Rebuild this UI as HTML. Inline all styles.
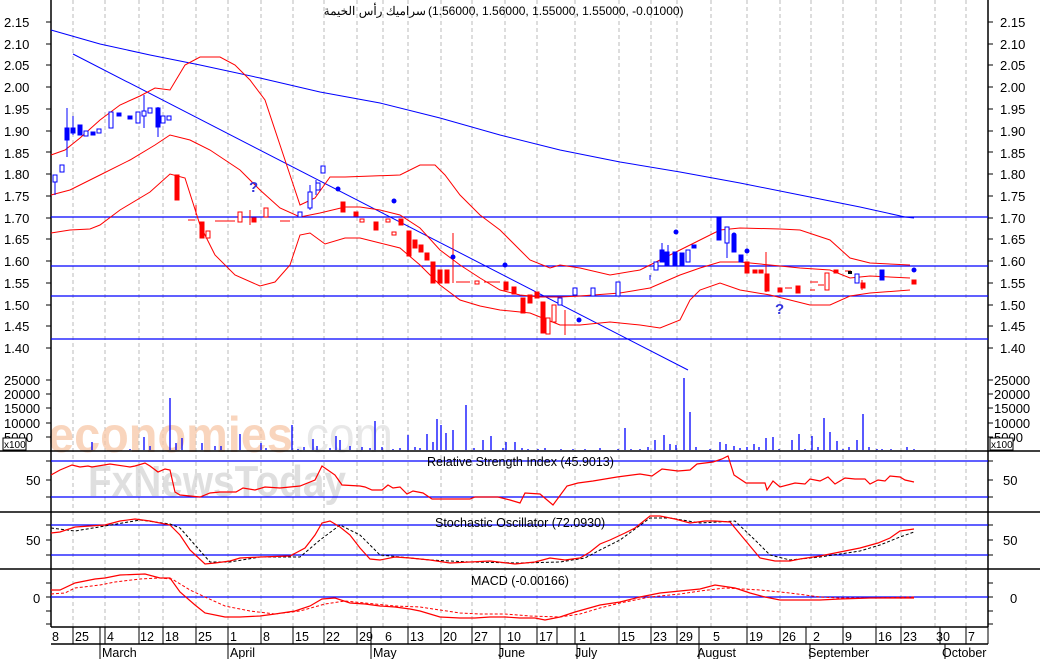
<!DOCTYPE html>
<html><head><meta charset="utf-8"><style>
html,body{margin:0;padding:0;background:#fff;overflow:hidden}
svg{display:block}
text{font-family:"Liberation Sans","Noto Sans CJK SC",sans-serif;fill:#000}
</style></head><body>
<svg width="1040" height="659" viewBox="0 0 1040 659" xmlns="http://www.w3.org/2000/svg">
<rect width="1040" height="659" fill="#fff"/>
<g stroke="#bbb" stroke-dasharray="4,3" stroke-width="1">
<path d="M73 0V627M105 0V627M139 0V627M163 0V627M196 0V627M228 0V627M261 0V627M293 0V627M324 0V627M357 0V627M383 0V627M408 0V627M441 0V627M472 0V627M505 0V627M537 0V627M575 0V627M619 0V627M651 0V627M677 0V627M711 0V627M747 0V627M780 0V627M811 0V627M843 0V627M876 0V627M901 0V627M935 0V627M966 0V627"/>
</g>
<text x="48" y="452" font-size="50" font-weight="bold" style="fill:#f8c8a8;opacity:.75" textLength="245" lengthAdjust="spacingAndGlyphs">economies</text>
<text x="293" y="452" font-size="50" style="fill:#e6e6e6;opacity:.9" textLength="100" lengthAdjust="spacingAndGlyphs">.com</text>
<text x="88" y="496" font-size="44" font-weight="bold" style="fill:#d8d8d8;opacity:.8" textLength="258" lengthAdjust="spacingAndGlyphs">FxNewsToday</text>
<g stroke="#000" stroke-width="1.5" fill="none">
<path d="M51 0V627M988 0V627"/>
<path d="M0 451H1040M0 512H1040M0 569H1040M51 627H988M51 644H988"/>
</g>
<g stroke="#000" stroke-width="1">
<path d="M46 22H51M46 44H51M46 65H51M46 87H51M46 109H51M46 131H51M46 152H51M46 174H51M46 196H51M46 218H51M46 239H51M46 261H51M46 283H51M46 305H51M46 326H51M46 348H51"/>
<path d="M988 22H993M988 44H993M988 65H993M988 87H993M988 109H993M988 131H993M988 152H993M988 174H993M988 196H993M988 218H993M988 239H993M988 261H993M988 283H993M988 305H993M988 326H993M988 348H993"/>
<path d="M46 380H51M46 394H51M46 408H51M46 423H51M46 437H51M988 380H993M988 394H993M988 408H993M988 423H993M988 437H993"/>
<path d="M46 461H51M46 480H51M46 497H51M988 461H993M988 480H993M988 497H993M46 525H51M46 540H51M46 555H51M988 525H993M988 540H993M988 555H993M46 583H51M46 597H51M46 611H51M46 624H51M988 583H993M988 597H993M988 611H993M988 624H993"/>
</g>
<g font-size="13">
<text x="4" y="27">2.15</text><text x="4" y="49">2.10</text><text x="4" y="70">2.05</text><text x="4" y="92">2.00</text><text x="4" y="114">1.95</text><text x="4" y="136">1.90</text><text x="4" y="158">1.85</text><text x="4" y="179">1.80</text><text x="4" y="201">1.75</text><text x="4" y="223">1.70</text><text x="4" y="244">1.65</text><text x="4" y="266">1.60</text><text x="4" y="288">1.55</text><text x="4" y="310">1.50</text><text x="4" y="331">1.45</text><text x="4" y="353">1.40</text>
<text x="1000" y="27">2.15</text><text x="1000" y="49">2.10</text><text x="1000" y="70">2.05</text><text x="1000" y="92">2.00</text><text x="1000" y="114">1.95</text><text x="1000" y="136">1.90</text><text x="1000" y="158">1.85</text><text x="1000" y="179">1.80</text><text x="1000" y="201">1.75</text><text x="1000" y="223">1.70</text><text x="1000" y="244">1.65</text><text x="1000" y="266">1.60</text><text x="1000" y="288">1.55</text><text x="1000" y="310">1.50</text><text x="1000" y="331">1.45</text><text x="1000" y="353">1.40</text>
<text x="4" y="385">25000</text><text x="4" y="399">20000</text><text x="4" y="413">15000</text><text x="4" y="428">10000</text><text x="4" y="442">5000</text>
<text x="994" y="385">25000</text><text x="994" y="399">20000</text><text x="994" y="413">15000</text><text x="994" y="428">10000</text><text x="994" y="442">5000</text>
<text x="26" y="485">50</text><text x="1003" y="485">50</text>
<text x="26" y="545">50</text><text x="1003" y="545">50</text>
<text x="33" y="603">0</text><text x="1010" y="603">0</text>
</g>
<rect x="3" y="438" width="23" height="12" fill="#fff" stroke="#000"/><text x="4" y="448" font-size="10">x100</text>
<rect x="990" y="438" width="23" height="12" fill="#fff" stroke="#000"/><text x="991" y="448" font-size="10">x100</text>
<text x="426" y="15" font-size="12" text-anchor="end">سراميك رأس الخيمة</text>
<text x="428" y="15" font-size="12">(1.56000, 1.56000, 1.55000, 1.55000, -0.01000)</text>
<g stroke="#0000ff" stroke-width="1.3">
<path d="M51 217H988M51 266H988M51 296H988M51 339H988"/>
<path d="M51 461H988M51 497H988M51 525H988M51 555H988M51 597H988"/>
</g>
<polyline fill="none" stroke="#0000ff" stroke-width="1" points="51,30 100,44 150,55 200,65 260,78 320,92 380,103 440,118 500,135 560,150 620,162 680,172 740,183 800,195 860,207 905,217 914,218"/>
<polyline fill="none" stroke="#0000ff" stroke-width="1" points="73,54 688,370"/>
<g fill="none" stroke="#ff0000" stroke-width="1">
<polyline points="51,155 65,150 80,138 100,120 120,105 140,96 155,88 170,90 185,65 200,57 220,57 235,65 250,80 265,100 280,145 290,175 300,205 315,198 330,177 345,177 400,175 420,165 435,165 445,175 460,195 480,215 500,230 520,250 530,260 550,268 560,265 580,268 610,275 640,270 660,260 680,250 700,240 720,230 740,228 780,229 800,230 830,240 850,258 870,263 910,265"/>
<polyline points="51,195 70,190 100,175 130,160 155,145 170,135 190,140 210,150 240,170 260,190 280,208 300,217 320,213 345,207 360,207 380,210 400,215 420,228 440,250 460,265 480,278 500,290 520,295 540,297 560,297 580,296 620,293 650,288 680,275 700,268 720,262 740,262 770,265 800,268 830,270 850,278 870,276 910,278"/>
<polyline points="51,233 70,230 90,229 100,225 120,210 150,192 170,174 185,178 200,225 215,255 235,275 260,286 275,282 290,265 300,235 310,233 325,244 345,238 360,238 380,243 400,248 420,265 440,285 460,300 480,306 500,310 530,313 560,325 580,325 610,322 640,325 660,328 680,320 690,300 700,290 720,283 740,290 770,295 790,300 810,305 830,305 850,296 870,293 910,290"/>
</g>
<g stroke="#0000ff" stroke-width="1" fill="#0000ff">
<path d="M55 175V195M67 108V157M73 116V135M144 95V128M158 107V137M310 185V210M316 180V195"/>
<rect x="53" y="175" width="4" height="7" fill="#fff"/><rect x="60" y="165" width="4" height="7" fill="#fff"/>
<rect x="65" y="128" width="4" height="12"/><rect x="71" y="128" width="4" height="5"/><rect x="78" y="125" width="4" height="10"/>
<rect x="84" y="131" width="4" height="5" fill="#fff"/><rect x="91" y="132" width="4" height="3"/><rect x="97" y="129" width="4" height="4" fill="#fff"/>
<rect x="109" y="112" width="4" height="16" fill="#fff"/><rect x="117" y="113" width="4" height="3"/><rect x="128" y="116" width="4" height="3"/>
<rect x="136" y="112" width="4" height="11" fill="#fff"/><rect x="142" y="111" width="4" height="5" fill="#fff"/><rect x="148" y="108" width="4" height="5" fill="#fff"/>
<rect x="156" y="108" width="4" height="19"/><rect x="161" y="116" width="4" height="7" fill="#fff"/><rect x="167" y="116" width="4" height="4" fill="#fff"/>
<rect x="298" y="212" width="4" height="5" fill="#fff"/><rect x="308" y="192" width="4" height="16" fill="#fff"/><rect x="316" y="183" width="4" height="7" fill="#fff"/><rect x="321" y="166" width="4" height="7" fill="#fff"/>
<rect x="558" y="298" width="4" height="7" fill="#fff"/><rect x="573" y="288" width="4" height="7" fill="#fff"/><rect x="591" y="288" width="4" height="8" fill="#fff"/><rect x="616" y="282" width="4" height="14" fill="#fff"/>
<rect x="654" y="262" width="4" height="8" fill="#fff"/><rect x="660" y="250" width="4" height="12"/><rect x="665" y="252" width="4" height="13"/><rect x="673" y="252" width="4" height="14"/><rect x="680" y="253" width="4" height="13"/><rect x="686" y="250" width="4" height="12" fill="#fff"/><rect x="692" y="245" width="4" height="3"/>
<rect x="717" y="218" width="4" height="22"/><rect x="725" y="227" width="4" height="16" fill="#fff"/><rect x="732" y="235" width="4" height="17"/><rect x="739" y="255" width="4" height="7"/>
<rect x="855" y="274" width="4" height="9" fill="#fff"/><rect x="880" y="270" width="4" height="10"/>
<path d="M727 243V258M650 275V280M662 243V262M668 245V256"/>
</g>
<g stroke="#ff0000" stroke-width="1" fill="#ff0000">
<path d="M196 205V215M250 210V225M453 233V283M565 310V335M766 252V292M862 280V290"/>
<rect x="175" y="175" width="4" height="25"/><rect x="200" y="222" width="4" height="16"/><rect x="206" y="231" width="4" height="7" fill="#fff"/>
<rect x="238" y="212" width="4" height="10" fill="#fff"/><rect x="252" y="218" width="4" height="4"/><rect x="264" y="208" width="4" height="9" fill="#fff"/>
<rect x="341" y="202" width="4" height="10"/><rect x="354" y="212" width="4" height="4"/><rect x="360" y="219" width="4" height="3" fill="#fff"/><rect x="374" y="222" width="4" height="8"/>
<rect x="386" y="219" width="4" height="3" fill="#fff"/><rect x="392" y="232" width="4" height="3" fill="#fff"/><rect x="399" y="219" width="4" height="6"/>
<rect x="407" y="231" width="4" height="25"/><rect x="413" y="240" width="4" height="8"/><rect x="419" y="245" width="4" height="7"/><rect x="425" y="253" width="4" height="7"/>
<rect x="431" y="262" width="4" height="21"/><rect x="438" y="270" width="4" height="13"/><rect x="445" y="270" width="4" height="13"/>
<rect x="475" y="281" width="4" height="3" fill="#fff"/><rect x="504" y="282" width="4" height="8"/><rect x="512" y="287" width="4" height="7"/>
<rect x="521" y="298" width="4" height="15"/><rect x="528" y="295" width="4" height="8"/><rect x="535" y="292" width="4" height="6"/>
<rect x="541" y="302" width="4" height="31"/><rect x="546" y="318" width="4" height="16" fill="#fff"/><rect x="552" y="305" width="4" height="17" fill="#fff"/>
<rect x="745" y="262" width="4" height="11"/><rect x="753" y="270" width="4" height="3"/><rect x="759" y="270" width="4" height="3"/>
<rect x="765" y="274" width="4" height="17"/><rect x="778" y="288" width="4" height="4"/><rect x="796" y="286" width="4" height="7"/>
<rect x="825" y="273" width="4" height="17" fill="#fff"/><rect x="834" y="270" width="4" height="3"/><rect x="861" y="283" width="4" height="5"/><rect x="912" y="280" width="4" height="4"/>
<path d="M188 220H195M215 221H235M280 221H290M456 282H470M484 282H500M785 288H792M810 282H818M818 285H824M845 271H851M810 290H815"/>
</g>
<rect x="848" y="271" width="4" height="3" fill="#000"/>
<g fill="#0000ff">
<circle cx="338" cy="189" r="2.5"/><circle cx="394" cy="201" r="2.5"/><circle cx="453" cy="257" r="2.5"/><circle cx="505" cy="265" r="2.5"/><circle cx="579" cy="320" r="2.5"/><circle cx="676" cy="232" r="2.5"/><circle cx="734" cy="235" r="2.5"/><circle cx="747" cy="251" r="2.5"/><circle cx="914" cy="270" r="2.5"/>
</g>
<text x="249" y="192" font-size="15" font-weight="bold" style="fill:#3333dd">?</text>
<text x="775" y="314" font-size="15" font-weight="bold" style="fill:#3333dd">?</text>
<g stroke="#0000ff" stroke-width="1.3">
<path d="M92 450V442M130 450V449M144 450V437M150 450V446M170 450V398M176 450V443M182 450V438M202 450V443M215 450V446M221 450V446M240 450V434M261 450V443M266 450V448M292 450V425M298 450V449M304 450V447M313 450V439M317 450V446M330 450V448M336 450V436M340 450V440M350 450V446M362 450V447M370 450V448M375 450V421M382 450V447M393 450V449M400 450V448M408 450V435M415 450V447M420 450V448M427 450V434M433 450V442M437 450V419M441 450V425M446 450V433M453 450V430M466 450V405M474 450V448M483 450V440M491 450V436M503 450V448M506 450V442M515 450V442M522 450V448M528 450V449M538 450V449M545 450V448M561 450V449M573 450V449M585 450V449M600 450V448M618 450V449M625 450V428M631 450V449M640 450V449M648 450V447M655 450V440M664 450V435M670 450V444M676 450V445M684 450V378M690 450V412M696 450V447M710 450V449M720 450V442M726 450V444M734 450V446M740 450V448M747 450V447M754 450V444M759 450V447M766 450V438M773 450V437M779 450V449M792 450V440M799 450V434M805 450V449M812 450V436M818 450V447M824 450V418M830 450V432M837 450V441M843 450V449M849 450V447M857 450V440M863 450V414M869 450V447M877 450V449M882 450V449M891 450V449M907 450V447M914 450V449"/>
</g>
<text x="427" y="466" font-size="12.5">Relative Strength Index (45.9013)</text>
<text x="435" y="527" font-size="12.5">Stochastic Oscillator (72.0930)</text>
<text x="471" y="585" font-size="12.5">MACD (-0.00166)</text>
<polyline fill="none" stroke="#ff0000" stroke-width="1.2" points="51,475 60,470 72,465 80,467 88,466 92,467 110,464 130,467 135,466 145,463 150,466 158,472 165,469 170,470 175,492 180,495 200,497 210,493 220,492 236,492 243,488 255,490 265,487 280,488 300,486 315,480 322,466 335,475 342,485 360,486 365,487 372,490 382,490 388,485 393,488 400,487 407,494 413,491 423,493 432,499 470,499 475,497 498,497 510,500 520,503 525,493 540,494 553,505 567,486 578,483 593,481 617,477 640,474 652,476 662,469 678,471 690,470 697,464 713,462 722,459 728,456 734,475 746,483 765,483 767,490 773,481 780,487 795,483 805,484 810,479 820,481 828,477 835,484 845,478 855,479 865,479 870,484 878,480 885,481 890,476 900,477 905,480 914,482"/>
<polyline fill="none" stroke="#000" stroke-width="1" stroke-dasharray="3,2" points="51,528 75,531 105,526 140,520 170,524 180,528 195,545 210,562 230,562 260,557 300,557 320,540 340,525 360,535 380,555 400,557 430,560 470,562 520,563 560,562 585,558 600,550 620,540 650,518 670,518 700,523 735,521 755,540 770,555 790,560 820,557 840,554 860,551 880,545 900,537 914,532"/>
<polyline fill="none" stroke="#ff0000" stroke-width="1.2" points="51,533 60,532 75,527 105,525 120,521 135,519 150,521 170,525 180,535 190,550 205,564 215,563 230,561 240,558 260,557 290,556 305,548 315,535 322,523 330,521 340,527 350,535 360,548 370,559 380,560 395,557 410,558 430,560 450,563 470,562 490,561 515,564 535,562 550,558 565,560 580,558 590,552 600,544 610,540 625,533 635,528 650,516 660,516 675,519 690,523 705,521 715,521 730,522 745,540 760,558 775,561 790,561 800,559 820,556 840,552 860,548 878,543 890,538 900,531 914,529"/>
<polyline fill="none" stroke="#ff0000" stroke-width="1" stroke-dasharray="3,2" points="51,594 65,593 75,588 100,585 115,582 140,579 160,578 172,579 190,590 205,597 225,606 250,611 275,614 300,611 325,604 345,601 365,603 395,606 420,607 440,610 460,613 480,614 505,614 530,616 560,617 580,614 600,608 620,603 650,597 680,594 700,591 725,588 760,590 790,593 820,597 840,598 870,598 914,597"/>
<polyline fill="none" stroke="#ff0000" stroke-width="1.2" points="51,590 60,590 75,583 95,579 105,578 120,575 145,574 160,578 170,578 180,592 195,605 205,613 225,617 240,617 260,616 275,614 295,611 310,606 322,599 335,598 350,603 365,604 380,606 395,607 410,609 420,611 440,617 460,618 475,618 490,617 505,617 520,618 535,618 545,620 560,617 575,612 600,605 620,602 640,597 660,593 680,591 700,589 715,585 735,588 750,593 765,597 780,600 800,600 820,600 840,599 870,598 914,598"/>
<g stroke="#000" stroke-width="1">
<path d="M73 627V644M100 627V644M105 627V644M139 627V644M163 627V644M196 627V644M228 627V644M261 627V644M293 627V644M324 627V644M357 627V644M371 627V644M408 627V644M441 627V644M472 627V644M500 627V644M537 627V644M557 627V644M575 627V644M619 627V644M651 627V644M677 627V644M699 627V644M747 627V644M780 627V644M806 627V644M843 627V644M876 627V644M901 627V644M940 627V644M966 627V644M988 627V644"/>
<path d="M100 644V659M228 644V659M371 644V659M500 644V659M577 644V659M699 644V659M810 644V659M945 644V659"/>
</g>
<g font-size="12.5">
<text x="52" y="641">8</text><text x="75" y="641">25</text><text x="107" y="641">4</text><text x="140" y="641">12</text><text x="165" y="641">18</text><text x="198" y="641">25</text><text x="230" y="641">1</text><text x="263" y="641">8</text><text x="295" y="641">15</text><text x="326" y="641">22</text><text x="359" y="641">29</text><text x="385" y="641">6</text><text x="410" y="641">13</text><text x="443" y="641">20</text><text x="474" y="641">27</text><text x="507" y="641">10</text><text x="539" y="641">17</text><text x="579" y="641">1</text><text x="621" y="641">15</text><text x="653" y="641">23</text><text x="679" y="641">29</text><text x="713" y="641">5</text><text x="749" y="641">19</text><text x="782" y="641">26</text><text x="813" y="641">2</text><text x="845" y="641">9</text><text x="878" y="641">16</text><text x="903" y="641">23</text><text x="936" y="641">30</text><text x="968" y="641">7</text>
<text x="102" y="657">March</text><text x="230" y="657">April</text><text x="373" y="657">May</text><text x="498" y="657">June</text><text x="575" y="657">July</text><text x="697" y="657">August</text><text x="808" y="657">September</text><text x="942" y="657">October</text>
</g>
</svg>
</body></html>
